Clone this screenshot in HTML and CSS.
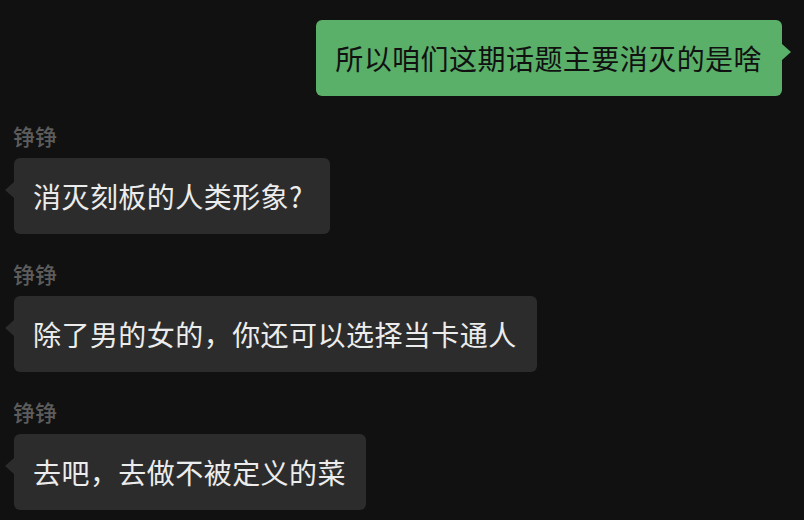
FILE: index.html
```html
<!DOCTYPE html>
<html lang="zh-CN">
<head>
  <meta charset="UTF-8" />
  <meta name="viewport" content="width=device-width, initial-scale=1.0" />
  <title>聊天记录</title>
  <link rel="stylesheet" href="styles.css">
</head>
<body>
  <main class="chat">
    <div class="msg mine">
      <div class="bubble">所以咱们这期话题主要消灭的是啥</div>
    </div>

    <div class="msg theirs">
      <div class="name">铮铮</div>
      <div class="bubble">消灭刻板的人类形象?</div>
    </div>

    <div class="msg theirs">
      <div class="name">铮铮</div>
      <div class="bubble">除了男的女的，你还可以选择当卡通人</div>
    </div>

    <div class="msg theirs">
      <div class="name">铮铮</div>
      <div class="bubble">去吧，去做不被定义的菜</div>
    </div>
  </main>
</body>
</html>
```

FILE: styles.css
```css
* { box-sizing: border-box; margin: 0; padding: 0; }
body { background: #111111; font-family: "Noto Sans CJK SC", "Noto Sans", sans-serif; overflow: hidden; }
.chat { display: flex; flex-direction: column; gap: 25px; padding: 20px 22px 0 14px; }
.msg { display: flex; flex-direction: column; gap: 9px; }
.mine { align-items: flex-end; }
.theirs { align-items: flex-start; }
.name { font-size: 22px; line-height: 28px; font-weight: 500; color: #5c5c5c; margin-left: -1px; }
.bubble { position: relative; font-size: 28px; line-height: 40px; letter-spacing: 0.45px; padding: 18px 20px 18px 19px; border-radius: 6px; white-space: nowrap; }
.theirs:nth-child(2) .bubble { padding-right: 27px; }
.mine .bubble { background: #5aaf69; color: #111111; }
.theirs .bubble { background: #2c2c2c; color: #ececec; }
.bubble::after { content: ""; position: absolute; top: 24px; width: 0; height: 0; border-top: 8px solid transparent; border-bottom: 8px solid transparent; }
.mine .bubble::after { right: -9px; border-left: 9px solid #5aaf69; }
.theirs .bubble::after { left: -9px; border-right: 9px solid #2c2c2c; }
```
